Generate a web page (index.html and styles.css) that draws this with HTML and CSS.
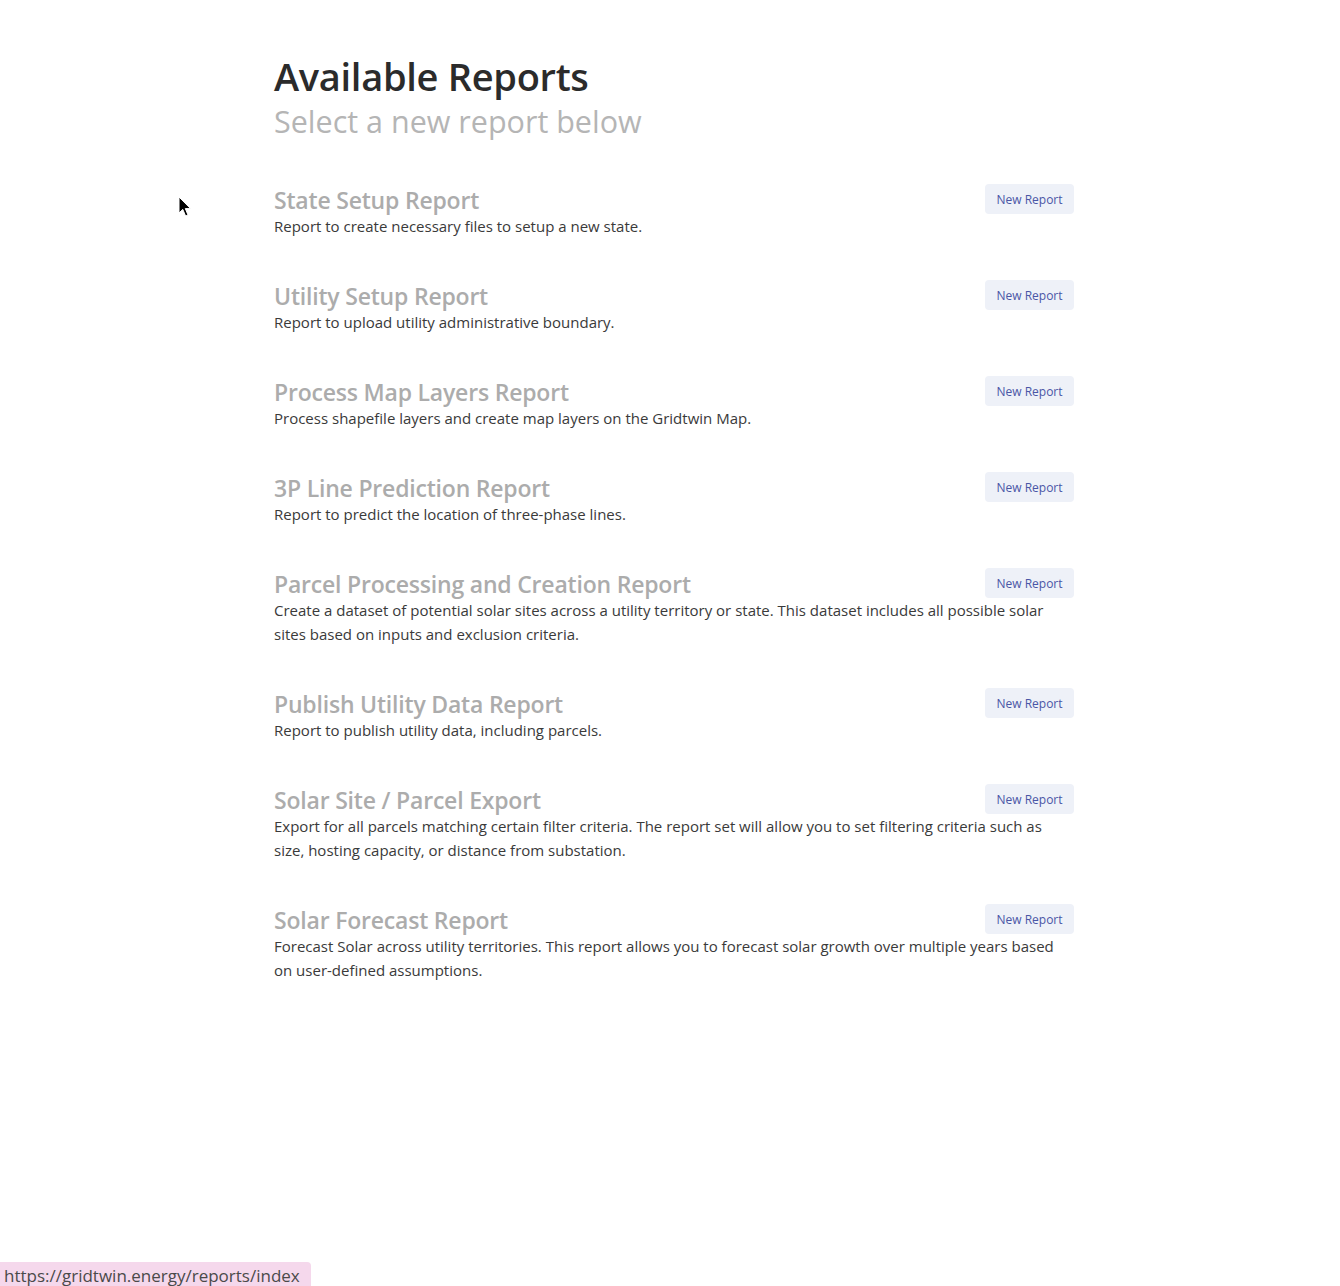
FILE: index.html
```
<!DOCTYPE html>
<html lang="en">
<head>
<meta charset="utf-8">
<title>Available Reports</title>
<link rel="stylesheet" href="styles.css">
</head>
<body>
<main class="page">
  <header class="page-head">
    <h1 class="page-title">Available Reports</h1>
    <p class="page-subtitle">Select a new report below</p>
  </header>
  <section class="reports">
    <article class="report">
      <div class="report-head">
        <h2 class="report-title">State Setup Report</h2>
        <a class="btn-new" href="#">New Report</a>
      </div>
      <p class="report-desc">Report to create necessary files to setup a new state.</p>
    </article>
    <article class="report">
      <div class="report-head">
        <h2 class="report-title">Utility Setup Report</h2>
        <a class="btn-new" href="#">New Report</a>
      </div>
      <p class="report-desc">Report to upload utility administrative boundary.</p>
    </article>
    <article class="report">
      <div class="report-head">
        <h2 class="report-title">Process Map Layers Report</h2>
        <a class="btn-new" href="#">New Report</a>
      </div>
      <p class="report-desc">Process shapefile layers and create map layers on the Gridtwin Map.</p>
    </article>
    <article class="report">
      <div class="report-head">
        <h2 class="report-title">3P Line Prediction Report</h2>
        <a class="btn-new" href="#">New Report</a>
      </div>
      <p class="report-desc">Report to predict the location of three-phase lines.</p>
    </article>
    <article class="report">
      <div class="report-head">
        <h2 class="report-title">Parcel Processing and Creation Report</h2>
        <a class="btn-new" href="#">New Report</a>
      </div>
      <p class="report-desc">Create a dataset of potential solar sites across a utility territory or state. This dataset includes all possible solar sites based on inputs and exclusion criteria.</p>
    </article>
    <article class="report">
      <div class="report-head">
        <h2 class="report-title">Publish Utility Data Report</h2>
        <a class="btn-new" href="#">New Report</a>
      </div>
      <p class="report-desc">Report to publish utility data, including parcels.</p>
    </article>
    <article class="report">
      <div class="report-head">
        <h2 class="report-title">Solar Site / Parcel Export</h2>
        <a class="btn-new" href="#">New Report</a>
      </div>
      <p class="report-desc">Export for all parcels matching certain filter criteria. The report set will allow you to set filtering criteria such as size, hosting capacity, or distance from substation.</p>
    </article>
    <article class="report">
      <div class="report-head">
        <h2 class="report-title">Solar Forecast Report</h2>
        <a class="btn-new" href="#">New Report</a>
      </div>
      <p class="report-desc">Forecast Solar across utility territories. This report allows you to forecast solar growth over multiple years based on user-defined assumptions.</p>
    </article>
  </section>
</main>

<svg class="cursor" width="14" height="22" viewBox="0 0 14 22" aria-hidden="true">
  <path d="M1 1 L1 17 L4.8 13.4 L7.6 20 L10 19 L7.3 12.6 L12.5 12.6 Z" fill="#000" stroke="#fff" stroke-width="1"/>
</svg>

<div class="status-bar">https://gridtwin.energy/reports/index</div>
</body>
</html>
```
FILE: styles.css
```
html, body {
  margin: 0;
  padding: 0;
  background: #ffffff;
}

body {
  font-family: "Open Sans", "Noto Sans", "Liberation Sans", sans-serif;
  color: #333333;
  min-height: 1286px;
  overflow: hidden;
}

.page {
  width: 800px;
  margin-left: 274px;
  padding-top: 52px;
}

.page-head {
  margin-bottom: 41px;
}

.page-title {
  margin: 0;
  font-size: 38px;
  line-height: 48px;
  font-weight: 600;
  color: #2b2b2b;
  letter-spacing: -0.3px;
}

.page-subtitle {
  margin: 0;
  font-size: 30.5px;
  line-height: 43px;
  font-weight: 400;
  color: #b5b5b5;
}

.reports {
  display: flex;
  flex-direction: column;
  gap: 42px;
}

.report-head {
  display: flex;
  align-items: flex-start;
  justify-content: space-between;
  gap: 20px;
}

.report-title {
  margin: 0;
  padding-top: 3px;
  font-size: 23px;
  line-height: 27px;
  font-weight: 600;
  color: #acacac;
  letter-spacing: -0.2px;
}

.report-desc {
  margin: 0;
  font-size: 15px;
  line-height: 24px;
  color: #3a3a3a;
}

.btn-new {
  flex: none;
  width: 89px;
  height: 30px;
  box-sizing: border-box;
  display: flex;
  align-items: center;
  justify-content: center;
  background: #eef1f8;
  border-radius: 4px;
  color: #4a56a6;
  font-size: 12px;
  text-decoration: none;
}

.cursor {
  position: absolute;
  left: 178px;
  top: 196px;
}

.status-bar {
  position: fixed;
  left: 0;
  bottom: 0;
  width: 311px;
  height: 24px;
  box-sizing: border-box;
  padding: 0 0 0 4px;
  background: #f5d8ec;
  border-top-right-radius: 4px;
  color: #4a4a4a;
  font-size: 17px;
  line-height: 28px;
  white-space: nowrap;
  overflow: hidden;
}
```
